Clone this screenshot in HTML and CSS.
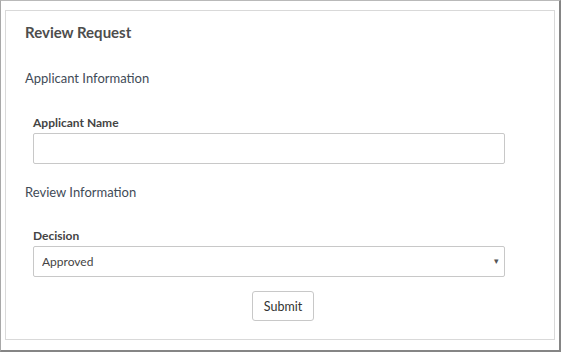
FILE: index.html
```html
<!DOCTYPE html>
<html lang="en">
<head>
    <meta charset="UTF-8">
    <meta name="viewport" content="width=device-width, initial-scale=1.0">
    <title>Review Request</title>
    <link rel="stylesheet" href="styles.css">
</head>
<body>
    <div class="frame">
        <div id="review-card">
            <h1>Review Request</h1>
            <form id="review-form">
                <h2 class="first">Applicant Information</h2>
                <div class="field">
                    <label for="applicant_name">Applicant Name</label>
                    <input type="text" name="applicant_name" id="applicant_name">
                </div>

                <h2>Review Information</h2>
                <div class="field">
                    <label for="decision">Decision</label>
                    <div class="select-wrap">
                        <select name="decision" id="decision">
                            <option>Approved</option>
                            <option>Rejected</option>
                        </select>
                        <span class="caret">&#9662;</span>
                    </div>
                </div>

                <div class="actions">
                    <button type="button">Submit</button>
                </div>
            </form>
        </div>
    </div>
</body>
</html>
```
FILE: styles.css
```css
html, body {
    margin: 0;
    padding: 0;
}

body {
    font-family: 'Lato', 'Liberation Sans', sans-serif;
    background-color: #fff;
}

.frame {
    width: 561px;
    height: 352px;
    box-sizing: border-box;
    border-top: 1px solid #b9b9b9;
    border-left: 1px solid #a8a8a8;
    border-right: 2px solid #858585;
    border-bottom: 2px solid #858585;
    padding: 9px 5px 0 4px;
}

#review-card {
    width: 550px;
    height: 330px;
    box-sizing: border-box;
    border: 1px solid #d9d9d9;
    padding: 11px 19px 0 19px;
}

h1 {
    margin: 0;
    font-size: 15px;
    font-weight: bold;
    color: #4d4d4d;
    line-height: 20px;
}

h2 {
    margin: 19px 0 0 0;
    font-size: 13px;
    font-weight: normal;
    color: #3f4b57;
    line-height: 18px;
}

h2.first {
    margin-top: 27px;
}

.field {
    padding: 0 30px 0 8px;
    margin-top: 27px;
}

h2.first + .field {
    margin-top: 28px;
}

label {
    display: block;
    font-size: 12px;
    font-weight: bold;
    color: #444;
    line-height: 16px;
    margin-bottom: 2px;
}

input {
    display: block;
    width: 100%;
    height: 31px;
    box-sizing: border-box;
    border: 1px solid #c8c8c8;
    border-radius: 2px;
    padding: 4px 8px;
    font-family: inherit;
    font-size: 12px;
}

.select-wrap {
    position: relative;
}

select {
    display: block;
    width: 100%;
    height: 31px;
    box-sizing: border-box;
    border: 1px solid #c8c8c8;
    border-radius: 2px;
    padding: 0 8px;
    background-color: #fff;
    appearance: none;
    -webkit-appearance: none;
    font-family: inherit;
    font-size: 12px;
    color: #444;
}

.caret {
    position: absolute;
    right: 6px;
    top: 9px;
    font-size: 9px;
    color: #555;
}

.actions {
    text-align: center;
    margin-top: 14px;
    padding-left: 6px;
}

button {
    background-color: #fff;
    color: #333;
    padding: 0 11px;
    height: 30px;
    border: 1px solid #c8c8c8;
    border-radius: 3px;
    font-family: inherit;
    font-size: 12.5px;
    cursor: pointer;
}
```
